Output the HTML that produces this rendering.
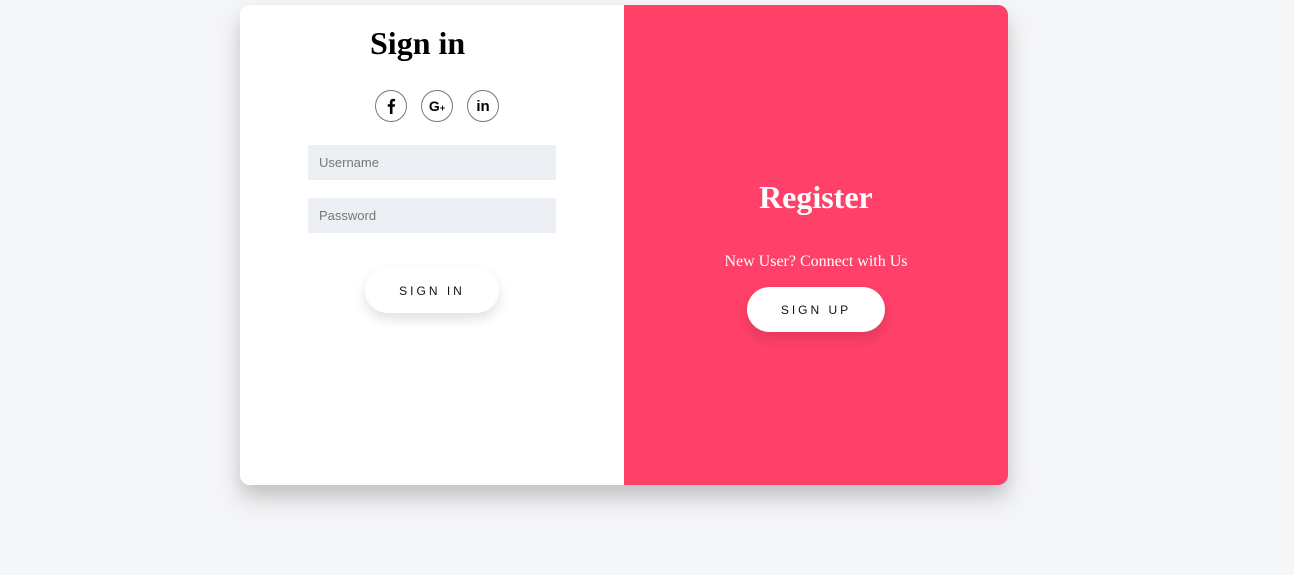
<!DOCTYPE html>
<html><head><meta charset="utf-8"><style>
*{box-sizing:border-box;margin:0;padding:0}
body{width:1294px;height:575px;background:#f5f6f8;position:relative;font-family:"Liberation Sans",sans-serif;overflow:hidden}
.card{position:absolute;left:240px;top:5px;width:768px;height:480px;border-radius:10px;background:#fff;box-shadow:0 14px 28px rgba(0,0,0,0.15),0 10px 14px rgba(0,0,0,0.08);overflow:hidden}
.right{position:absolute;left:384px;top:0;width:384px;height:480px;background:#ff4069}
h1{font-family:"Liberation Serif",serif;font-weight:bold;font-size:32px;position:absolute;white-space:nowrap}
.soc{position:absolute;top:85px;width:32px;height:32px;border:1px solid #777;border-radius:50%;display:flex;align-items:center;justify-content:center}
.inp{position:absolute;left:68px;width:248px;height:35px;background:#eceff4;color:#777;font-size:13px;padding:10px 11px}
.btn{position:absolute;height:45px;border-radius:23px;background:#fff;font-size:12px;letter-spacing:3px;display:flex;align-items:center;justify-content:center;color:#111;box-shadow:0 6px 12px rgba(0,0,0,0.12)}
</style></head><body>
<div class="card">
<h1 style="left:130px;top:20px">Sign in</h1>
<div class="soc" style="left:135px"><svg width="14" height="16" viewBox="0 0 14 16"><path d="M8.5 16V8.8h2.2l.4-2.6H8.5V4.6c0-.8.3-1.3 1.3-1.3h1.3V1c-.3 0-1.1-.1-2-.1-2 0-3.2 1.2-3.2 3.3v2H3.7v2.6h2.2V16z" fill="#000"/></svg></div>
<div class="soc" style="left:181px"><span style="font-weight:bold;font-size:14px">G<span style="font-size:9px">+</span></span></div>
<div class="soc" style="left:227px"><span style="font-weight:bold;font-size:15px">in</span></div>
<div class="inp" style="top:140px">Username</div>
<div class="inp" style="top:193px">Password</div>
<div class="btn" style="left:125px;top:263px;width:134px">SIGN IN</div>
<div class="right">
<h1 style="left:135px;top:174px;color:#fff">Register</h1>
<div style="position:absolute;left:0;width:384px;top:248px;text-align:center;color:#fff;font-family:'Liberation Serif',serif;font-size:16px">New User? Connect with Us</div>
<div class="btn" style="left:123px;top:282px;width:138px">SIGN UP</div>
</div>
</div>
</body></html>
